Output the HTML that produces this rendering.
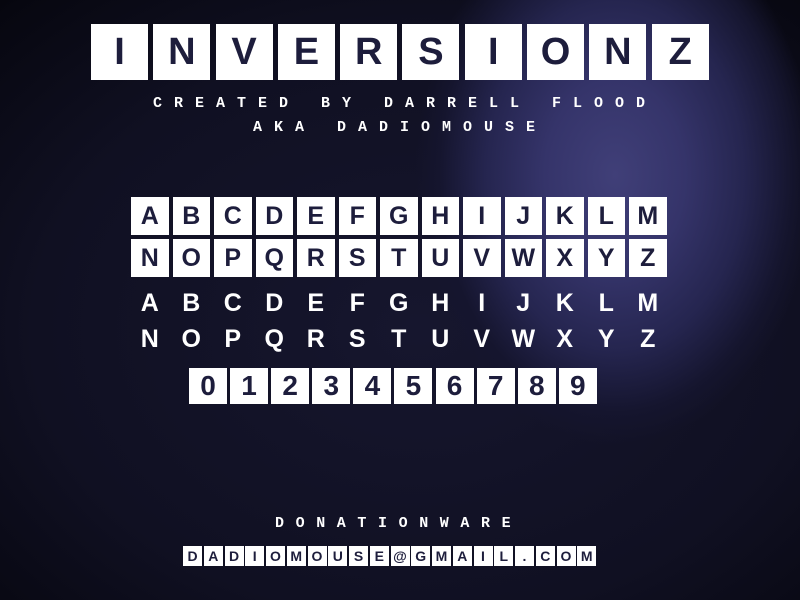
<!DOCTYPE html>
<html><head><meta charset="utf-8"><style>
html,body{margin:0;padding:0}
body{width:800px;height:600px;overflow:hidden;position:relative;font-family:"Liberation Sans",sans-serif;
background:
radial-gradient(ellipse 200px 270px at 615px 175px,#403f78 0%,#35346a 35%,#25254f 65%,#15152e 88%,rgba(0,0,0,0) 100%),
radial-gradient(ellipse 700px 520px at 420px 330px,#16162e 0%,#101022 55%,#070710 85%,#000 100%);
background-color:#000}
.row{position:absolute;display:flex}
.row div{display:flex;align-items:center;justify-content:center;font-weight:bold;flex:none}
.t div{width:57px;height:56px;margin-right:5.3px;background:#fff;color:#1d1d3c;font-size:38px}
.g div{width:37.5px;height:38px;margin-right:4px;background:#fff;color:#1d1d3c;font-size:25px}
.p div{width:37.5px;height:22px;margin-right:4px;color:#fff;font-size:25px}
.d div{width:38px;height:36px;margin-right:3.1px;background:#fff;color:#1d1d3c;font-size:28px}
.e div{width:19px;height:20px;margin-right:1.75px;background:#fff;color:#1d1d3c;font-size:14px}
.s{position:absolute;color:#fff;font-family:"Liberation Mono",monospace;font-weight:bold;font-size:15px;letter-spacing:12px;white-space:pre;line-height:15px}
</style></head><body>
<div class="row t" style="left:91px;top:24px"><div>I</div><div>N</div><div>V</div><div>E</div><div>R</div><div>S</div><div>I</div><div>O</div><div>N</div><div>Z</div></div>
<div class="s" style="left:153px;top:96px">CREATED BY DARRELL FLOOD</div>
<div class="s" style="left:253px;top:120px">AKA DADIOMOUSE</div>
<div class="row g" style="left:131px;top:197px"><div>A</div><div>B</div><div>C</div><div>D</div><div>E</div><div>F</div><div>G</div><div>H</div><div>I</div><div>J</div><div>K</div><div>L</div><div>M</div></div>
<div class="row g" style="left:131px;top:239px"><div>N</div><div>O</div><div>P</div><div>Q</div><div>R</div><div>S</div><div>T</div><div>U</div><div>V</div><div>W</div><div>X</div><div>Y</div><div>Z</div></div>
<div class="row p" style="left:131px;top:292px"><div>A</div><div>B</div><div>C</div><div>D</div><div>E</div><div>F</div><div>G</div><div>H</div><div>I</div><div>J</div><div>K</div><div>L</div><div>M</div></div>
<div class="row p" style="left:131px;top:328px"><div>N</div><div>O</div><div>P</div><div>Q</div><div>R</div><div>S</div><div>T</div><div>U</div><div>V</div><div>W</div><div>X</div><div>Y</div><div>Z</div></div>
<div class="row d" style="left:189px;top:368px"><div>0</div><div>1</div><div>2</div><div>3</div><div>4</div><div>5</div><div>6</div><div>7</div><div>8</div><div>9</div></div>
<div class="s" style="left:275px;top:516px;letter-spacing:11.6px">DONATIONWARE</div>
<div class="row e" style="left:183px;top:546px"><div>D</div><div>A</div><div>D</div><div>I</div><div>O</div><div>M</div><div>O</div><div>U</div><div>S</div><div>E</div><div>@</div><div>G</div><div>M</div><div>A</div><div>I</div><div>L</div><div>.</div><div>C</div><div>O</div><div>M</div></div>
</body></html>
